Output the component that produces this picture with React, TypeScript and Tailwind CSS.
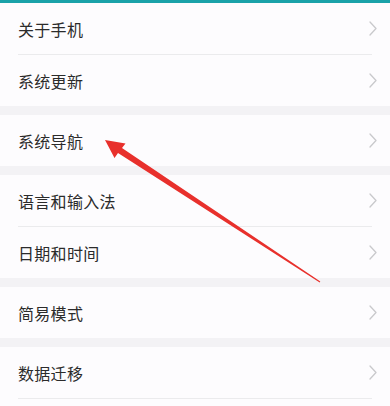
import { Fragment } from 'react';

const sections: string[][] = [
  ['关于手机', '系统更新'],
  ['系统导航'],
  ['语言和输入法', '日期和时间'],
  ['简易模式'],
  ['数据迁移'],
];

function Chevron() {
  return (
    <svg width="8" height="15" viewBox="0 0 8 15" fill="none" className="shrink-0">
      <path d="M1 1 L7 7.5 L1 14" stroke="#c9c9cc" strokeWidth="1.3" strokeLinecap="round" strokeLinejoin="round" />
    </svg>
  );
}

function Row({ label }: { label: string }) {
  return (
    <div className="h-[51px] flex items-center justify-between pl-[18px] pr-[13px] bg-[#fdfcfe]">
      <span className="text-[16px] text-[#2b2b2b] tracking-[0.3px]">{label}</span>
      <Chevron />
    </div>
  );
}

export default function App() {
  return (
    <div
      className="relative w-[390px] h-[406px] overflow-hidden bg-[#f3f2f5]"
      style={{ fontFamily: '"Noto Sans CJK SC", "Noto Sans", sans-serif' }}
    >
      <div className="h-[3px] bg-[#1aa2a9]" />
      {sections.map((items, si) => (
        <Fragment key={si}>
          {si > 0 && <div className="h-[9px]" />}
          <div className="bg-[#fdfcfe]">
            {items.map((label, i) => (
              <Fragment key={label}>
                {i > 0 && <div className="mx-[18px] h-px bg-[#ebebed]" />}
                <Row label={label} />
              </Fragment>
            ))}
            {si === sections.length - 1 && (
              <>
                <div className="mx-[18px] h-px bg-[#ebebed]" />
                <div className="h-[40px]" />
              </>
            )}
          </div>
        </Fragment>
      ))}

      {/* red annotation arrow */}
      <svg className="absolute inset-0 pointer-events-none" width="390" height="406" viewBox="0 0 390 406">
        <polygon
          points="105,140 125.5,143.5 122,148 320.3,281.5 319.7,282.5 118,153 114.5,158"
          fill="#e8302c"
        />
      </svg>
    </div>
  );
}
